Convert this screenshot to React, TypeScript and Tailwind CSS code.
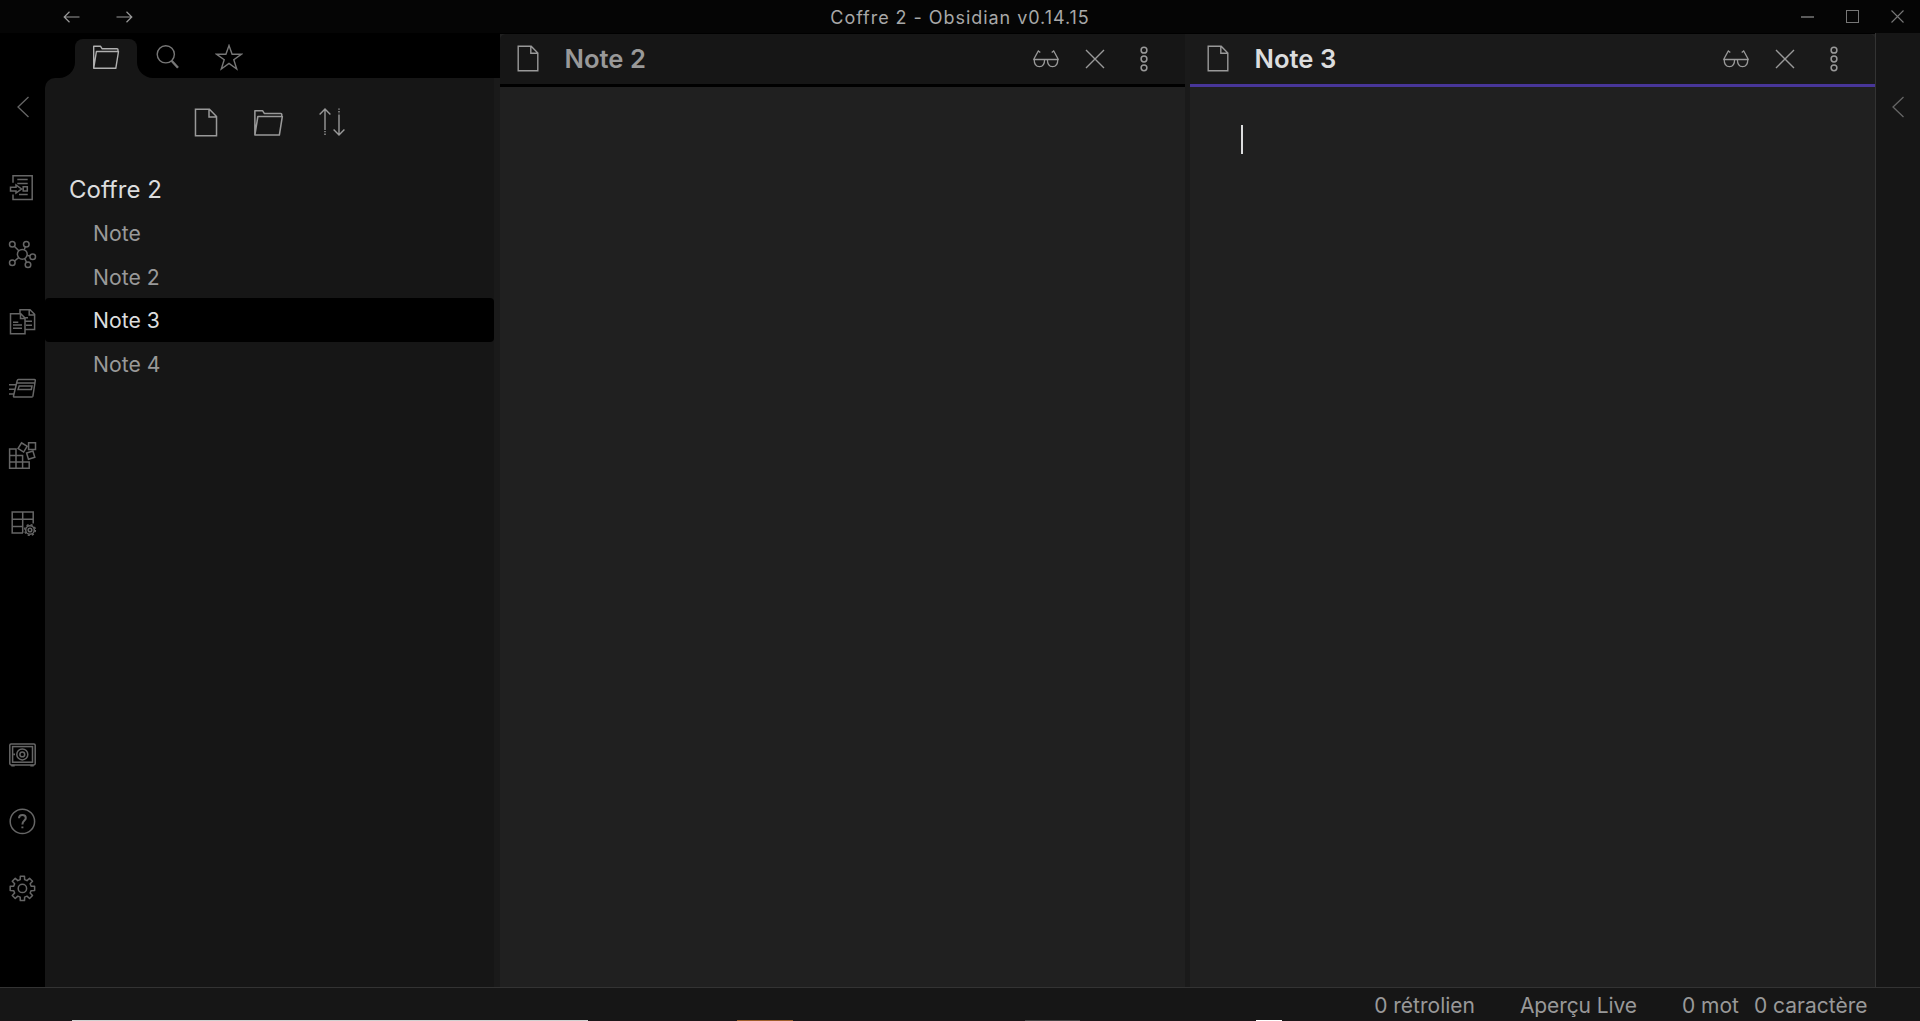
import React from "react";

type IconProps = {
  w?: number;
  h?: number;
  vb?: string;
  sw?: number;
  className?: string;
  children: React.ReactNode;
};

function Icon({ w = 31, h = 31, vb, sw = 1.5, className = "", children }: IconProps) {
  return (
    <svg
      width={w}
      height={h}
      viewBox={vb ?? `0 0 ${w} ${h}`}
      fill="none"
      stroke="currentColor"
      strokeWidth={sw}
      className={`block shrink-0 ${className}`}
    >
      {children}
    </svg>
  );
}

function gearPath(c: number, outer: number, inner: number) {
  const points: string[] = [];
  for (let i = 0; i < 8; i++) {
    const base = (i * Math.PI) / 4;
    const steps: [number, number][] = [
      [-0.25, inner],
      [-0.17, outer],
      [0.17, outer],
      [0.25, inner],
    ];
    for (const [offset, r] of steps) {
      points.push(`${(c + r * Math.cos(base + offset)).toFixed(2)} ${(c + r * Math.sin(base + offset)).toFixed(2)}`);
    }
  }
  return `M${points.join("L")}Z`;
}

const Chevron = () => (
  <Icon w={14} h={22} sw={1.3}>
    <path d="M12.5 1L2 11L12.5 21" />
  </Icon>
);

const Folder = ({ w = 28, h = 26 }: { w?: number; h?: number }) => (
  <Icon w={w} h={h} vb="0 0 28 26" sw={1.4}>
    <path d="M1.7 24.3V2.3H8.6L10.2 4.8H25a1 1 0 0 1 1 1V7.3M4.4 7.5H26.5L23.8 24.3H1.7Z" strokeLinejoin="round" />
  </Icon>
);

const FileIcon = ({ w = 22, h = 27 }: { w?: number; h?: number }) => (
  <Icon w={w} h={h} vb="0 0 22 27" sw={1.4}>
    <path d="M1.2 1.2H14.2L20.8 8V25.8H1.2ZM13.8 1.2V8.3H20.8" />
  </Icon>
);

const Glasses = () => (
  <Icon w={28} h={20} sw={1.3}>
    <path d="M1.5 10.8L6.3 2L8.3 3.6M26.5 10.8L21.7 2L19.7 3.6M1.3 10.5H26.7M2.2 10.5C2.2 15.5 3.6 17.7 7.5 17.7S12.6 15.5 12.6 10.5M25.8 10.5C25.8 15.5 24.4 17.7 20.5 17.7S15.4 15.5 15.4 10.5" />
  </Icon>
);

const ribbonTop = [
  <Icon key="switch">
    <path d="M6 10.7V3.7H25.2V27.5H6V22.5M10.3 7.6H20.7M10.3 11.5H20.7M12 22.4H20.7M16.2 14.8H20.3V19H16.2ZM3.5 15.3H9V13L14.5 17L9 21V19H3.5Z" />
  </Icon>,
  <Icon key="graph">
    <circle cx="15.3" cy="15.3" r="4.9" />
    <circle cx="5.3" cy="5.3" r="2.8" />
    <circle cx="19.3" cy="5.3" r="2.8" />
    <circle cx="25.7" cy="17.7" r="2.8" />
    <circle cx="21" cy="25.7" r="2.8" />
    <circle cx="5.3" cy="23.7" r="2.8" />
    <path d="M7.3 7.3L11.8 11.8M18.3 8L17.2 10.7M20.2 16.4L23 17M17.7 19.6L19.6 23.3M7.6 22L11.6 18.6" />
  </Icon>,
  <Icon key="templates">
    <path d="M3.5 7.8H13.8L18 12V27.7H3.5ZM13.5 7.8V12.4H18M13 7.3V3.7H23L27.6 8.3V23.4H18.6M22.2 3.7V8.9H27.6M6 16.3H11.3M6 19H15M6 22.3H15M18.5 11.7H21M18.5 15.2H25M19 19.2H25" />
  </Icon>,
  <Icon key="review">
    <path d="M11.5 6.6H27.5a.8 .8 0 0 1 .8 .9L25.9 23.2a1 1 0 0 1-1 .8H7.3a.8 .8 0 0 1-.8-1L10.2 7.6a1.3 1.3 0 0 1 1.3-1ZM9.6 10H27.9M12.2 12.9H25L24.3 16.4H11.1ZM2 11.7H8.7M2 16.3H7.5M2 21H6.5" />
  </Icon>,
  <Icon key="blocks">
    <path d="M2.6 8.9H9V28.3M2.6 8.3V28.3H22.2V22H2.6M2.6 15.4H15.6V28.3M21.6 2.8H28.5V9.4H21.6Z" />
    <rect x="12.3" y="4.1" width="6.6" height="6.6" transform="rotate(32 15.6 7.4)" />
    <rect x="20.4" y="11.8" width="6.6" height="6.6" transform="rotate(-17 23.7 15.1)" />
  </Icon>,
  <Icon key="tables">
    <path d="M16 26H5.2V5H26.2V16.5M15.7 5V26M5.2 12.2H26.2M5.2 19.4H15.7" />
    <circle cx="23" cy="23" r="4.3" />
    <circle cx="23" cy="23" r="5.4" strokeDasharray="2.12 2.12" strokeWidth="1.4" />
    <circle cx="23" cy="23" r="1.8" />
  </Icon>,
];

const ribbonBottom = [
  <Icon key="vault">
    <rect x="2.8" y="4.9" width="25.4" height="21" rx="1.3" />
    <rect x="5.6" y="7.6" width="19.9" height="15.6" />
    <circle cx="15.3" cy="15.4" r="5.5" />
    <circle cx="15.3" cy="15.4" r="2.4" />
    <path d="M6.3 15.4H8M4.3 26.6H7.7M23.3 26.6H26.7" strokeWidth="1.6" />
  </Icon>,
  <Icon key="help">
    <circle cx="15.4" cy="15.4" r="12.2" />
    <path d="M12 12.2C12 10 13.4 8.9 15.4 8.9S18.8 10.1 18.8 12C18.8 14.7 15.4 14.6 15.4 18.6M15.4 20.6V22.3" strokeWidth="2" />
  </Icon>,
  <Icon key="settings">
    <path d={gearPath(15.4, 12.4, 9)} strokeLinejoin="round" />
    <circle cx="15.4" cy="15.4" r="4.2" />
  </Icon>,
];

const files = ["Note", "Note 2", "Note 3", "Note 4"];

function Pane({ title, active = false }: { title: string; active?: boolean }) {
  return (
    <section className="flex w-[685px] shrink-0 flex-col bg-[#202020]">
      <header
        className={
          active
            ? "flex h-[53px] items-center rounded-tr-md border-b-3 border-[#483699] bg-[#1a1a1a] pl-[17px] text-[#dcddde]"
            : "flex h-[53px] items-center rounded-tl-md border-b-3 border-black bg-[#161616] pl-[17px] text-[#999999]"
        }
      >
        <span className="-mt-px text-[#999999]">
          <FileIcon />
        </span>
        <h2 className="ml-[25.5px] w-[467.5px] text-[25.6px] leading-none font-semibold">{title}</h2>
        <div className="-mt-px flex items-center text-[#999999]">
          <Glasses />
          <Icon w={20} h={20} sw={1.4} className="ml-[25px]">
            <path d="M1 1L19 19M19 1L1 19" />
          </Icon>
          <Icon w={10} h={26} sw={1.5} className="ml-[34px]">
            <circle cx="5" cy="4.2" r="2.9" />
            <circle cx="5" cy="13" r="2.9" />
            <circle cx="5" cy="21.8" r="2.9" />
          </Icon>
        </div>
      </header>
      <div className="flex-1 pt-[38px] pl-[51px]">{active && <div className="h-[29px] w-[2px] bg-[#dcddde]" />}</div>
    </section>
  );
}

export default function App() {
  return (
    <div className="flex h-[1021px] w-[1920px] flex-col overflow-hidden bg-black font-['Inter',sans-serif]">
      <div className="grid h-[33px] shrink-0 grid-cols-[1fr_auto_1fr] items-center bg-[#050505] text-[#999999]">
        <div className="flex gap-[35.5px] pl-[63px]">
          <Icon w={17} h={12} sw={1.2}>
            <path d="M16.5 6H1.2M6.5 .8L1.2 6L6.5 11.2" />
          </Icon>
          <Icon w={17} h={12} sw={1.2}>
            <path d="M.5 6H15.8M10.5 .8L15.8 6L10.5 11.2" />
          </Icon>
        </div>
        <div className="pt-[3px] text-[18px] leading-none tracking-[0.95px] text-[#a8a8a8]">Coffre 2 - Obsidian v0.14.15</div>
        <div className="flex items-center justify-end gap-[32px] pr-[16px] text-[#777777]">
          <div className="h-[2px] w-[13px] bg-[#5a5a5a]" />
          <div className="h-[13px] w-[13px] border border-[#777777]" />
          <Icon w={13} h={13} sw={1.1}>
            <path d="M.5 .5L12.5 12.5M12.5 .5L.5 12.5" />
          </Icon>
        </div>
      </div>

      <div className="flex min-h-0 flex-1">
        <nav className="flex w-[45px] flex-col bg-black text-[#666666]">
          <div className="flex h-[121px] items-center pt-[27px] pl-[16px]">
            <Chevron />
          </div>
          {ribbonTop.map((icon) => (
            <div key={icon.key} className="flex h-[67px] items-center pl-[7px]">
              {icon}
            </div>
          ))}
          <div className="mt-auto mb-[65px]">
            {ribbonBottom.map((icon) => (
              <div key={icon.key} className="flex h-[67px] items-center pl-[7px]">
                {icon}
              </div>
            ))}
          </div>
        </nav>

        <aside className="flex w-[455px] flex-col bg-black text-[#999999]">
          <div className="flex h-[45px] pt-[6px] pl-[14px]">
            <div className="flex w-[16px] items-end bg-[#161616]">
              <div className="h-full w-full rounded-br-[16px] bg-black" />
            </div>
            <div className="flex bg-black">
              <div className="flex h-[39px] w-[62px] justify-center rounded-t-[8px] bg-[#161616] pt-[5px] text-[#b0b0b0]">
                <Folder />
              </div>
            </div>
            <div className="w-[16px] bg-[#161616]">
              <div className="h-full w-full rounded-bl-[16px] bg-black" />
            </div>
            <div className="flex items-start pt-[5px] text-[#777777]">
              <Icon w={24} h={26} sw={1.4} className="ml-[3px]">
                <circle cx="9.8" cy="10.3" r="8.6" />
                <path d="M15.6 16.8L22 23.8" strokeWidth="2.4" />
              </Icon>
              <Icon w={28} h={28} sw={1.4} className="ml-[35px]">
                <path d="M14 1.5L17.1 10.3H26.3L18.8 15.8L21.7 25L14 19.4L6.3 25L9.2 15.8L1.7 10.3H10.9Z" />
              </Icon>
            </div>
          </div>
          <div className="flex flex-1 rounded-tl-[10px] bg-[#161616]">
            <div className="w-[449px]">
              <div className="flex h-[86px] items-center pt-[2px] pl-[149px] text-[#999999]">
                <FileIcon w={24} h={29} />
                <div className="ml-[35px]">
                  <Folder w={31} h={29} />
                </div>
                <Icon w={28} h={30} sw={1.4} className="ml-[34px]">
                  <path d="M7 2V23M1.6 7.5L7 2L12.4 7.5M21 28.3V7.5M15.6 22.5L21 28L26.4 22.5" />
                  <path d="M7 24V29M21 1.5V7" strokeDasharray="1.3 1.3" />
                </Icon>
              </div>
              <div className="pt-[15px] pl-[24px] text-[24px] leading-[22px] text-[#dcddde]">Coffre 2</div>
              <ul className="mt-[10px] text-[21.2px]">
                {files.map((name) => (
                  <li
                    key={name}
                    className={
                      name === "Note 3"
                        ? "flex h-[43.5px] items-center rounded-[4px] bg-black pt-[3px] pl-[48px] text-[#dcddde]"
                        : "flex h-[43.5px] items-center pt-[3px] pl-[48px] text-[#999999]"
                    }
                  >
                    {name}
                  </li>
                ))}
              </ul>
            </div>
            <div className="w-[6px] bg-[#1a1a1a]" />
          </div>
        </aside>

        <main className="flex pt-px">
          <Pane title="Note 2" />
          <div className="w-[5px] bg-[#1a1a1a]" />
          <Pane title="Note 3" active />
        </main>

        <div className="w-[45px] border-l border-[#333333] bg-[#161616] pt-[63px] pl-[15px] text-[#666666]">
          <Chevron />
        </div>
      </div>

      <footer className="flex h-[34px] shrink-0 flex-col border-t border-[#333333] bg-[#161616]">
        <div className="flex flex-1 items-center justify-end pt-[2px] pr-[52.5px] text-[21px] leading-none text-[#999999]">
          <span>0 rétrolien</span>
          <span className="ml-[45px] tracking-[-0.1px]">Aperçu Live</span>
          <span className="ml-[45px]">0 mot</span>
          <span className="ml-[15px]">0 caractère</span>
        </div>
        <div className="flex h-px shrink-0 bg-[#1a1518] pl-[72px]">
          <div className="w-[516px] bg-[#d0d0d0]" />
          <div className="ml-[114px] w-[56px] bg-[#a0602c] translate-x-[35px]" />
          <div className="ml-[267px] w-[55px] bg-[#444444]" />
          <div className="ml-[176px] w-[26px] bg-white" />
        </div>
      </footer>
    </div>
  );
}
